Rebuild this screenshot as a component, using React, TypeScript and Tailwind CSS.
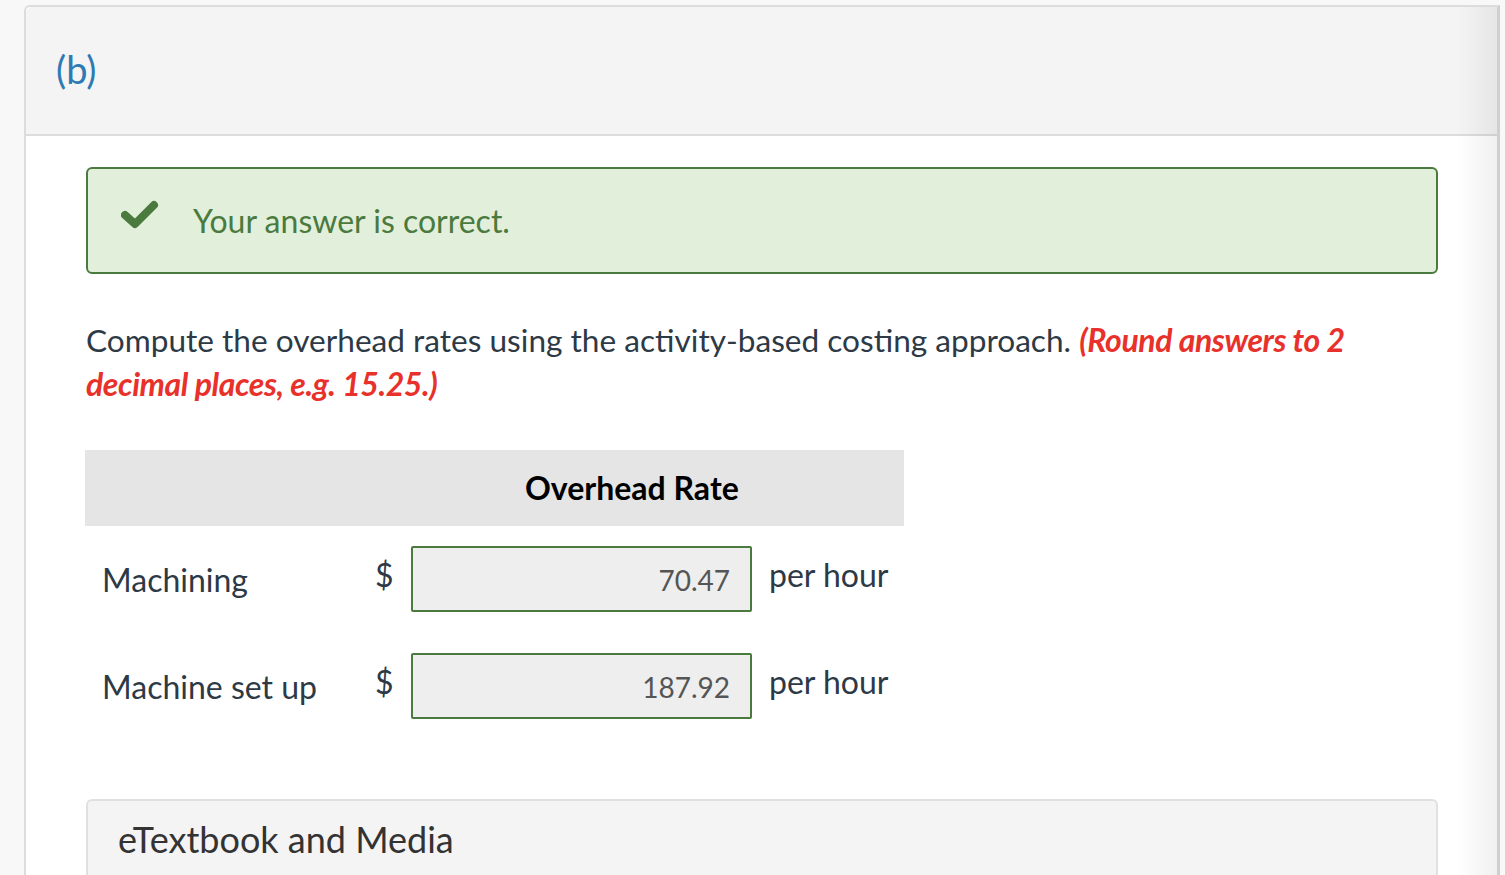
export default function App() {
  const rows = [
    { label: 'Machining', value: '70.47' },
    { label: 'Machine set up', value: '187.92' },
  ]

  return (
    <div className="min-h-screen bg-[#f8f8f8] pt-[5px] pl-[24px] font-['Lato',sans-serif] overflow-hidden h-[875px]">
      <div className="relative w-[1476px] bg-white border-t-2 border-l-2 border-r-[3px] border-[#dcdcdc] border-r-[#cfcfcf] rounded-tl-[6px] h-[900px]">
        <div className="h-[129px] bg-[#f4f4f4] border-b-2 border-[#dcdcdc] flex items-center pl-[30px] rounded-tl-[6px]">
          <span className="text-[38px] leading-none text-[#2f7ab3] -mt-[3px]">(b)</span>
        </div>

        <div className="pl-[60px] pr-[59px] pt-[31px]">
          <div className="h-[107px] bg-[#e2efdb] border-2 border-[#4a7a3e] rounded-[6px] flex items-center pl-[33px]">
            <svg className="w-[38px] h-[30px] -mt-[14px]" viewBox="0 0 38 30">
              <path d="M4 16 L14 25 L33 6" fill="none" stroke="#4a7a3e" strokeWidth={8} strokeLinecap="round" strokeLinejoin="round" />
            </svg>
            <span className="ml-[34px] text-[32px] text-[#4a7a3e] leading-none">Your answer is correct.</span>
          </div>

          <p className="mt-[44px] text-[31.6px] leading-[44px] text-[#2d3a46] pr-[60px]">
            Compute the overhead rates using the activity-based costing approach.{' '}
            <span className="text-[32px] text-[#e8312a] font-bold italic tracking-[-0.4px]">(Round answers to 2 decimal places, e.g. 15.25.)</span>
          </p>

          <div className="mt-[44px] w-[819px] -ml-px">
            <div className="h-[76px] bg-[#e5e5e5] flex items-center pl-[440px]">
              <span className="text-[32px] font-bold text-black leading-none">Overhead Rate</span>
            </div>
            {rows.map((r, i) => (
              <div key={r.label} className={`flex items-center ${i === 0 ? 'mt-[20px]' : 'mt-[41px]'}`}>
                <div className="w-[272px] pl-[17px] text-[32px] text-[#2d3a46] leading-none pt-[2px]">{r.label}</div>
                <div className="w-[54px] pl-[18px] text-[32px] text-[#2d3a46] leading-none -mt-[8px]">$</div>
                <div className="w-[341px] h-[66px] bg-[#eeeeee] border-2 border-[#4a7a3e] rounded-[2px] flex items-center justify-end pr-[20px] text-[28px] text-[#555] leading-none pt-[2px]">
                  {r.value}
                </div>
                <div className="pl-[17px] text-[32px] text-[#2d3a46] leading-none -mt-[8px]">per hour</div>
              </div>
            ))}
          </div>

          <div className="mt-[80px] h-[120px] bg-[#f4f4f4] border-t-2 border-l-2 border-r-2 border-[#e0e0e0] rounded-t-[6px] pl-[30px] pt-[20px]">
            <span className="text-[36px] text-[#333] leading-none">eTextbook and Media</span>
          </div>
        </div>

        <div className="pointer-events-none absolute inset-y-0 right-0 w-[40px] bg-gradient-to-r from-transparent to-black/[0.06]" />
      </div>
    </div>
  )
}
